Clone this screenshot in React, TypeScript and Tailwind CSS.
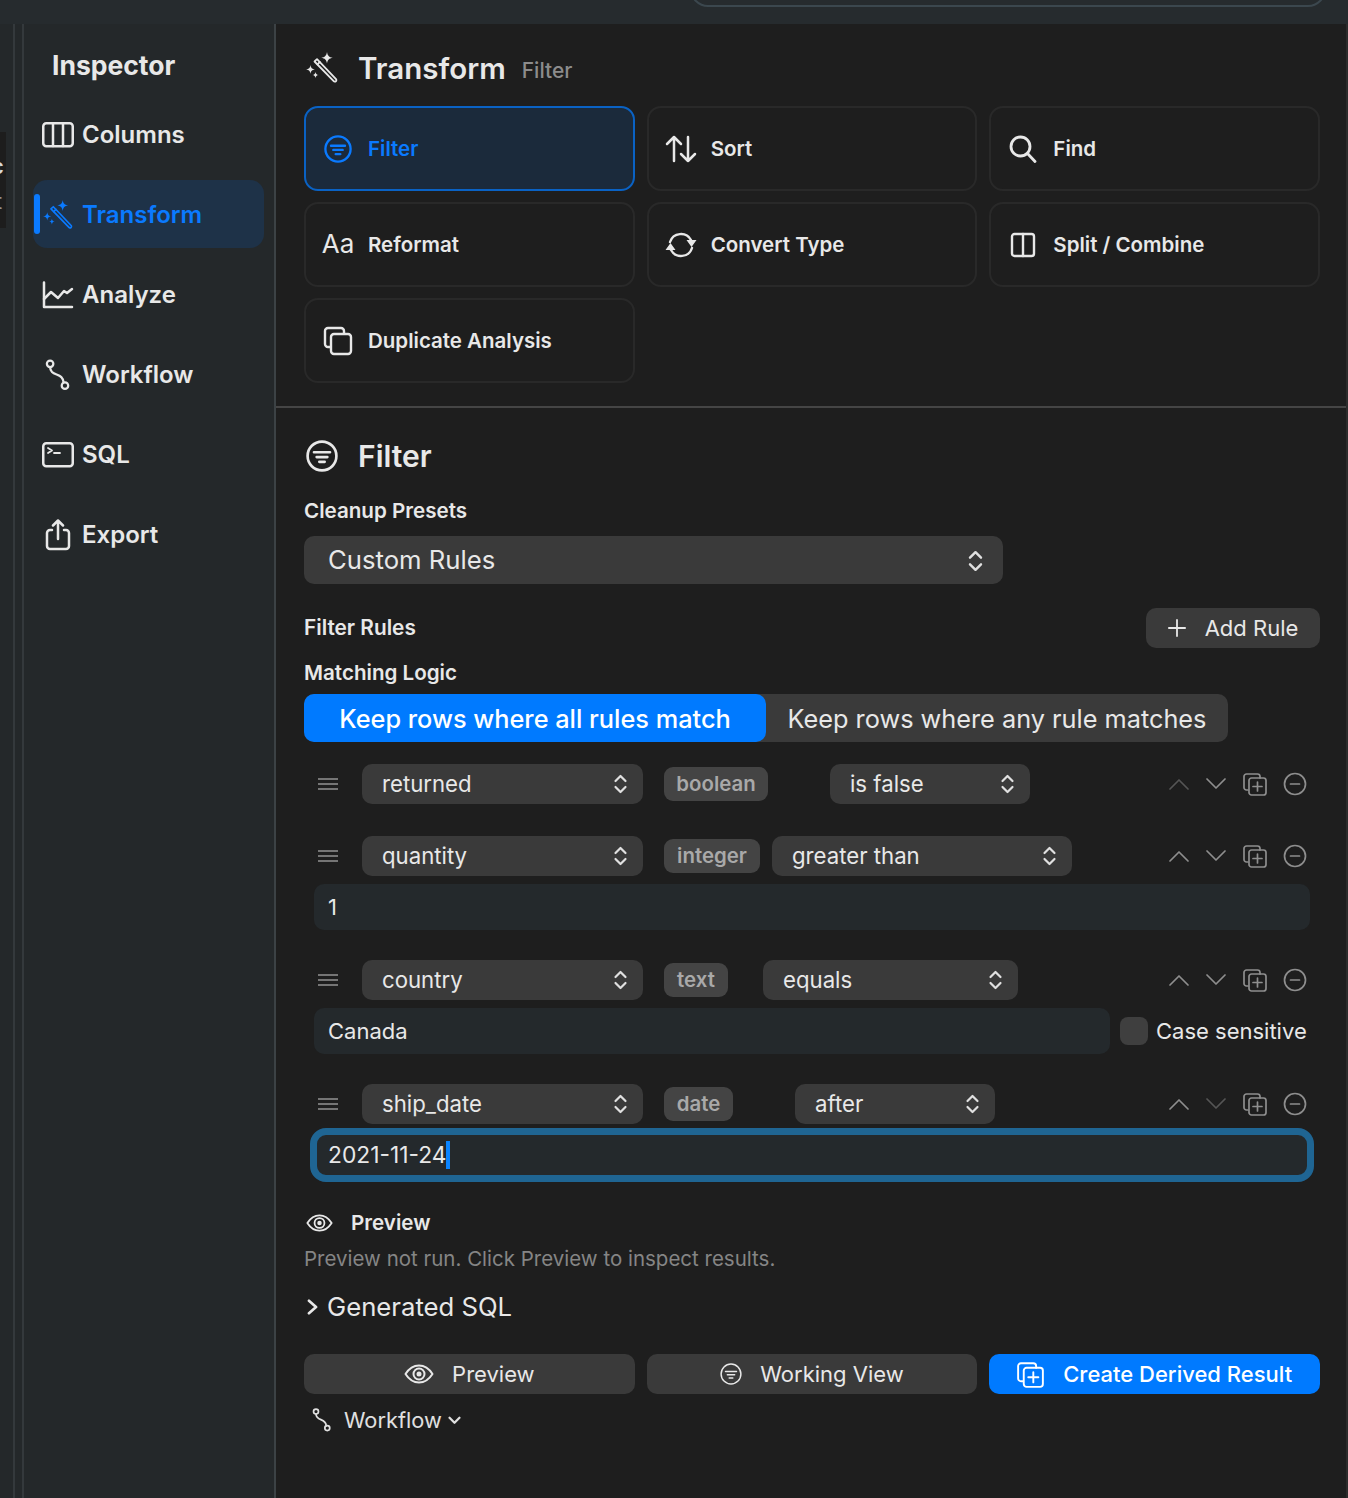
import type { ReactNode } from 'react';

type IconProps = { className?: string };

const base = {
  fill: 'none',
  stroke: 'currentColor',
  strokeLinecap: 'round' as const,
  strokeLinejoin: 'round' as const,
};

function WandIcon({ className }: IconProps) {
  return (
    <svg viewBox="0 0 32 32" className={className} {...base} strokeWidth={1.8}>
      <path d="M8.500 9.500 11 7.200 30 27.200a1.500 1.500 0 0 1-2.300 2z" />
      <path d="M11.500 12.300 13.800 10" />
      <path fill="currentColor" stroke="none" d="M21 0c.6 3.800 2 5.200 5.800 5.800-3.800.6-5.200 2-5.800 5.800-.6-3.800-2-5.200-5.800-5.800 3.800-.6 5.200-2 5.800-5.800z" />
      <path fill="currentColor" stroke="none" d="M4.500 13c.5 3 1.400 3.900 4.400 4.400-3 .5-3.900 1.400-4.400 4.400-.5-3-1.400-3.900-4.400-4.400 3-.5 3.900-1.400 4.400-4.400z" />
      <path fill="currentColor" stroke="none" d="M9.500 20c.4 2 1 2.600 3 3-2 .4-2.600 1-3 3-.4-2-1-2.600-3-3 2-.4 2.600-1 3-3z" />
    </svg>
  );
}

function ColumnsIcon({ className }: IconProps) {
  return (
    <svg viewBox="0 0 32 26" className={className} {...base} strokeWidth={2.500}>
      <rect x="1.250" y="1.250" width="29.500" height="23" rx="3" />
      <path d="M11 1v23M21 1v23" />
    </svg>
  );
}

function ChartIcon({ className }: IconProps) {
  return (
    <svg viewBox="0 0 32 28" className={className} {...base} strokeWidth={2.500}>
      <path d="M2 1.500V26h28" />
      <path d="M2 18 9 11l7 6 6-7 3 2 5-4" />
    </svg>
  );
}

function WorkflowIcon({ className }: IconProps) {
  return (
    <svg viewBox="0 0 28 34" className={className} {...base} strokeWidth={2.400}>
      <circle cx="5.500" cy="5" r="3.500" />
      <circle cx="21.500" cy="28.500" r="3.500" />
      <path d="M5.500 8.500c0 5 3 6.500 7 8 4 1.500 7 3 7.500 8.500" />
    </svg>
  );
}

function TerminalIcon({ className }: IconProps) {
  return (
    <svg viewBox="0 0 32 26" className={className} {...base} strokeWidth={2.500}>
      <rect x="1.250" y="1.250" width="29.500" height="23" rx="3" />
      <path d="m6 6 4 2.500-4 2.500M12 11h6" strokeWidth={1.800} />
    </svg>
  );
}

function ShareIcon({ className }: IconProps) {
  return (
    <svg viewBox="0 0 26 32" className={className} {...base} strokeWidth={2.500}>
      <path d="M7 11H5a3 3 0 0 0-3 3v13a3 3 0 0 0 3 3h16a3 3 0 0 0 3-3V14a3 3 0 0 0-3-3h-2" />
      <path d="M13 20V2M8 6.500 13 1.500l5 5" />
    </svg>
  );
}

function FilterCircleIcon({ className, strokeWidth = 2 }: IconProps & { strokeWidth?: number }) {
  return (
    <svg viewBox="0 0 30 30" className={className} {...base} strokeWidth={strokeWidth}>
      <circle cx="15" cy="15" r="13.500" />
      <path d="M7.500 11.500h15M10 16h10M12.500 20.500h5" />
    </svg>
  );
}

function SortIcon({ className }: IconProps) {
  return (
    <svg viewBox="0 0 32 28" className={className} {...base} strokeWidth={2.500}>
      <path d="M9 26V2M2 9l7-7 7 7" />
      <path d="M23 2v24M16 19l7 7 7-7" />
    </svg>
  );
}

function SearchIcon({ className }: IconProps) {
  return (
    <svg viewBox="0 0 28 28" className={className} {...base} strokeWidth={2.800}>
      <circle cx="11.500" cy="11.500" r="9.500" />
      <path d="m18.500 18.500 7.500 8" />
    </svg>
  );
}

function ConvertIcon({ className }: IconProps) {
  return (
    <svg viewBox="0 0 32 30" className={className} {...base} strokeWidth={2.400}>
      <path d="M5 12A11.500 11.500 0 0 1 26 10" />
      <path d="M27 18A11.500 11.500 0 0 1 6 20" />
      <path fill="currentColor" stroke="none" d="M26.500 17 21.500 10h10zM5.500 13l5 7h-10z" />
    </svg>
  );
}

function SplitIcon({ className }: IconProps) {
  return (
    <svg viewBox="0 0 26 26" className={className} {...base} strokeWidth={2.400}>
      <rect x="2" y="2" width="22" height="22" rx="2.500" />
      <path d="M13 2v22" />
    </svg>
  );
}

function CopyIcon({ className }: IconProps) {
  return (
    <svg viewBox="0 0 30 30" className={className} {...base} strokeWidth={2.400}>
      <path d="M7 21H5a3 3 0 0 1-3-3V5a3 3 0 0 1 3-3h13a3 3 0 0 1 3 3v2" />
      <rect x="8" y="8" width="20" height="20" rx="3" />
    </svg>
  );
}

function CopyPlusIcon({ className, strokeWidth = 1.700 }: IconProps & { strokeWidth?: number }) {
  return (
    <svg viewBox="0 0 24 24" className={className} {...base} strokeWidth={strokeWidth}>
      <path d="M5 18H3.500A2.500 2.500 0 0 1 1 15.500v-11A2.500 2.500 0 0 1 3.500 2h11A2.500 2.500 0 0 1 17 4.500V6" />
      <rect x="6" y="6" width="17" height="17" rx="2.500" />
      <path d="M14.500 10v9M10 14.500h9" />
    </svg>
  );
}

function MinusCircleIcon({ className }: IconProps) {
  return (
    <svg viewBox="0 0 24 24" className={className} {...base} strokeWidth={1.700}>
      <circle cx="12" cy="12" r="10.500" />
      <path d="M7.500 12h9" />
    </svg>
  );
}

function EyeIcon({ className }: IconProps) {
  return (
    <svg viewBox="0 0 30 20" className={className} {...base} strokeWidth={2}>
      <path d="M1.500 10C5 4.500 9.500 1.500 15 1.500S25 4.500 28.500 10C25 15.500 20.500 18.500 15 18.500S5 15.500 1.500 10z" />
      <circle cx="15" cy="10" r="5.500" />
      <circle cx="15" cy="10" r="2.500" fill="currentColor" stroke="none" />
    </svg>
  );
}

function UpDownIcon({ className }: IconProps) {
  return (
    <svg viewBox="0 0 14 20" className={className} {...base} strokeWidth={2.200}>
      <path d="m2 7 5-5 5 5M2 13l5 5 5-5" />
    </svg>
  );
}

function Chevron({ up, dim }: { up?: boolean; dim?: boolean }) {
  return (
    <svg viewBox="0 0 20 12" className={`h-[12px] w-[20px] ${dim ? 'text-[#555555]' : 'text-[#8e8e8e]'}`} {...base} strokeWidth={1.700}>
      <path d={up ? 'M1 11 10 2l9 9' : 'M1 1l9 9 9-9'} />
    </svg>
  );
}

function NavItem({ icon, label, active }: { icon: ReactNode; label: string; active?: boolean }) {
  return (
    <div className={`relative flex h-[68px] items-center rounded-[14px] pl-[49px] pt-[2px] text-[24px] font-semibold ${active ? 'bg-[#1e3248] text-[#0a7aff]' : 'text-[#e8e8e8]'}`}>
      {active && <span className="absolute left-[1px] top-[14px] h-[40px] w-[6px] rounded-full bg-[#0a7aff]" />}
      <span className="absolute left-[9px] top-[1px] flex h-full w-[32px] items-center justify-center">{icon}</span>
      {label}
    </div>
  );
}

function ToolCard({ icon, label, active }: { icon: ReactNode; label: string; active?: boolean }) {
  return (
    <div className={`flex h-[85px] items-center rounded-[14px] border-2 text-[20.5px] font-semibold ${active ? 'border-[#0a62c4] bg-[#1b2a3b] text-[#0a7aff]' : 'border-[#292929] text-[#e8e8e8]'}`}>
      <span className="ml-[16px] flex w-[32px] items-center justify-center">{icon}</span>
      <span className="ml-[14px] mt-[2px]">{label}</span>
    </div>
  );
}

function SelectBox({ label, className }: { label: string; className: string }) {
  return (
    <div className={`flex h-[40px] items-center justify-between rounded-[10px] bg-[#3a3a3a] pl-[20px] pr-[15px] text-[22.2px] text-[#e8e8e8] ${className}`}>
      {label}
      <UpDownIcon className="h-[20px] w-[15px] text-[#e0e0e0]" />
    </div>
  );
}

function RuleRow({ field, type, badgeClass, op, opClass, upDim, downDim }: {
  field: string;
  type: string;
  badgeClass: string;
  op: string;
  opClass: string;
  upDim?: boolean;
  downDim?: boolean;
}) {
  return (
    <div className="flex h-[40px] items-center">
      <div className="ml-[14px] flex w-[20px] flex-col gap-[3px]">
        <span className="h-[2px] bg-[#757575]" />
        <span className="h-[2px] bg-[#757575]" />
        <span className="h-[2px] bg-[#757575]" />
      </div>
      <SelectBox label={field} className="ml-[24px] w-[281px]" />
      <span className={`ml-[21px] flex h-[34px] items-center justify-center rounded-[9px] bg-[#444444] text-[20.4px] font-semibold text-[#a9a9a9] ${badgeClass}`}>{type}</span>
      <SelectBox label={op} className={opClass} />
      <div className="ml-auto mr-[13px] flex items-center">
        <Chevron up dim={upDim} />
        <span className="ml-[17px]"><Chevron dim={downDim} /></span>
        <CopyPlusIcon className="ml-[17px] h-[24px] w-[24px] text-[#8e8e8e]" />
        <MinusCircleIcon className="ml-[16px] h-[24px] w-[24px] text-[#8e8e8e]" />
      </div>
    </div>
  );
}

function ActionButton({ icon, label, primary }: { icon: ReactNode; label: string; primary?: boolean }) {
  return (
    <div className={`flex h-[40px] items-center justify-center rounded-[10px] text-[22px] ${primary ? 'bg-[#007aff] font-medium text-white' : 'bg-[#3a3a3a] text-[#e8e8e8]'}`}>
      {icon}
      {label}
    </div>
  );
}

export default function App() {
  return (
    <div className="flex h-[1498px] w-[1348px] flex-col overflow-hidden bg-[#1e1e1e] font-['Inter',sans-serif]">
      {/* window toolbar, only the edge of the search field shows */}
      <div className="h-[24px] shrink-0 overflow-hidden bg-[#262b2e] pl-[690px] pr-[22px]">
        <div className="mt-[-33px] h-[40px] rounded-[18px] border-2 border-[#3b474e]" />
      </div>

      <div className="flex flex-1">
        {/* left gutter */}
        <div className="w-[24px] shrink-0 bg-[#24282a] pt-[108px]">
          <div className="relative h-full">
            <div className="h-[96px] w-[6px] overflow-hidden bg-[#1d1d1d] text-[22px] leading-[32px] text-[#d8d8d8]">
              <div className="ml-[-9px] mt-[18px] font-semibold">c</div>
              <div className="ml-[-5px] mt-[3px] text-[#909090]">t</div>
            </div>
            <span className="absolute bottom-0 left-[13px] top-[-108px] w-[2px] bg-[#34393c]" />
            <span className="absolute bottom-0 left-[22px] top-[-108px] w-[2px] bg-[#34393c]" />
          </div>
        </div>

        {/* sidebar */}
        <aside className="w-[252px] shrink-0 border-r-2 border-[#3c4245] bg-[#24282a] pl-[9px] pr-[10px]">
          <h2 className="ml-[19px] mt-[23px] text-[26.5px] leading-[36px] font-bold text-[#e8e8e8]">Inspector</h2>
          <div className="mt-[17px] flex flex-col gap-[12px]">
            <NavItem icon={<ColumnsIcon className="h-[26px] w-[32px]" />} label="Columns" />
            <NavItem active icon={<WandIcon className="h-[30px] w-[30px]" />} label="Transform" />
            <NavItem icon={<ChartIcon className="h-[28px] w-[32px]" />} label="Analyze" />
            <NavItem icon={<WorkflowIcon className="h-[32px] w-[26px]" />} label="Workflow" />
            <NavItem icon={<TerminalIcon className="h-[26px] w-[32px]" />} label="SQL" />
            <NavItem icon={<ShareIcon className="h-[32px] w-[26px]" />} label="Export" />
          </div>
        </aside>

        <main className="flex-1 border-r-2 border-[#2c2c2c]">
          <section className="h-[384px] border-b-2 border-[#454545] pl-[28px] pr-[26px]">
            <div className="flex h-[82px] items-center pt-[6px]">
              <WandIcon className="ml-[2px] h-[32px] w-[32px] text-[#e8e8e8]" />
              <h1 className="ml-[20px] text-[29.5px] font-semibold text-[#e8e8e8]">Transform</h1>
              <span className="ml-[16px] mt-[6px] text-[21px] font-medium text-[#8c8c8c]">Filter</span>
            </div>
            <div className="grid grid-cols-3 gap-x-[12px] gap-y-[11px]">
              <ToolCard active icon={<FilterCircleIcon className="h-[28px] w-[28px]" strokeWidth={2.500} />} label="Filter" />
              <ToolCard icon={<SortIcon className="h-[28px] w-[32px]" />} label="Sort" />
              <ToolCard icon={<SearchIcon className="h-[28px] w-[28px]" />} label="Find" />
              <ToolCard icon={<span className="mt-[-2px] text-[26px] font-normal">Aa</span>} label="Reformat" />
              <ToolCard icon={<ConvertIcon className="h-[30px] w-[32px]" />} label="Convert Type" />
              <ToolCard icon={<SplitIcon className="h-[26px] w-[26px]" />} label="Split / Combine" />
              <ToolCard icon={<CopyIcon className="h-[30px] w-[30px]" />} label="Duplicate Analysis" />
            </div>
          </section>

          <section className="pl-[28px] pr-[26px]">
            <div className="mt-[28px] flex h-[40px] items-center">
              <FilterCircleIcon className="ml-[2px] h-[32px] w-[32px] text-[#e8e8e8]" strokeWidth={2.500} />
              <h2 className="ml-[20px] text-[30px] font-semibold text-[#e8e8e8]">Filter</h2>
            </div>
            <div className="mt-[21px] h-[28px] text-[20.6px] leading-[28px] font-semibold text-[#e8e8e8]">Cleanup Presets</div>
            <div className="mt-[11px] flex h-[48px] w-[699px] items-center justify-between rounded-[10px] bg-[#3a3a3a] pl-[24px] pr-[19px] pt-[1px] text-[25.7px] text-[#e8e8e8]">
              Custom Rules
              <UpDownIcon className="h-[22px] w-[17px] text-[#e0e0e0]" />
            </div>

            <div className="mt-[24px] flex h-[40px] items-center justify-between">
              <span className="text-[20.8px] font-semibold text-[#e8e8e8]">Filter Rules</span>
              <div className="flex h-[40px] w-[174px] items-center justify-center rounded-[10px] bg-[#3a3a3a] text-[22px] text-[#e8e8e8]">
                <svg viewBox="0 0 20 20" className="mr-[19px] h-[18px] w-[18px]" {...base} strokeWidth={2}>
                  <path d="M10 1v18M1 10h18" />
                </svg>
                Add Rule
              </div>
            </div>
            <div className="mt-[11px] h-[28px] text-[20.6px] leading-[28px] font-semibold text-[#e8e8e8]">Matching Logic</div>
            <div className="mt-[7px] flex h-[48px] w-[924px] rounded-[10px] bg-[#3a3a3a] text-[25.3px] text-[#e8e8e8]">
              <div className="flex w-[462px] items-center justify-center rounded-[10px] bg-[#007aff] pt-[1px] font-medium text-white">Keep rows where all rules match</div>
              <div className="flex flex-1 items-center justify-center pt-[1px]">Keep rows where any rule matches</div>
            </div>

            <div className="mt-[22px]">
              <RuleRow field="returned" type="boolean" badgeClass="w-[104px]" op="is false" opClass="ml-[62px] w-[200px]" upDim />
              <div className="mt-[32px]">
                <RuleRow field="quantity" type="integer" badgeClass="w-[96px]" op="greater than" opClass="ml-[12px] w-[300px]" />
              </div>
              <div className="ml-[10px] mr-[10px] mt-[8px] flex h-[46px] items-center rounded-[10px] bg-[#24292c] pl-[14px] text-[22px] text-[#e8e8e8]">1</div>

              <div className="mt-[30px]">
                <RuleRow field="country" type="text" badgeClass="w-[64px]" op="equals" opClass="ml-[35px] w-[255px]" />
              </div>
              <div className="mt-[8px] flex h-[46px] items-center">
                <div className="ml-[10px] flex h-full w-[796px] items-center rounded-[10px] bg-[#24292c] pl-[14px] text-[22px] text-[#e8e8e8]">Canada</div>
                <span className="ml-[10px] h-[28px] w-[28px] rounded-[8px] bg-[#3f3f3f]" />
                <span className="ml-[8px] text-[22px] text-[#e8e8e8]">Case sensitive</span>
              </div>

              <div className="mt-[30px]">
                <RuleRow field="ship_date" type="date" badgeClass="w-[69px]" op="after" opClass="ml-[62px] w-[200px]" downDim />
              </div>
              <div className="ml-[6px] mr-[6px] mt-[4px] flex h-[54px] items-center rounded-[16px] border-[7px] border-[#1f6593] bg-[#24292c] pl-[11px] text-[22.8px] text-[#e8e8e8]">
                2021-11-24
                <span className="h-[28px] w-[4px] bg-[#0a84ff]" />
              </div>
            </div>

            <div className="mt-[27px] flex h-[28px] items-center text-[20.6px] font-semibold text-[#e8e8e8]">
              <EyeIcon className="ml-[2px] h-[18px] w-[27px]" />
              <span className="ml-[18px]">Preview</span>
            </div>
            <p className="mt-[8px] h-[28px] text-[20.5px] leading-[28px] text-[#858585]">Preview not run. Click Preview to inspect results.</p>
            <div className="mt-[14px] flex h-[40px] items-center text-[25.7px] text-[#e8e8e8]">
              <svg viewBox="0 0 12 18" className="ml-[3px] h-[16px] w-[11px]" {...base} strokeWidth={3}>
                <path d="m2 2 8 7-8 7" />
              </svg>
              <span className="ml-[9px]">Generated SQL</span>
            </div>
            <div className="mt-[27px] grid grid-cols-3 gap-x-[12px]">
              <ActionButton icon={<EyeIcon className="mr-[18px] h-[20px] w-[30px]" />} label="Preview" />
              <ActionButton icon={<FilterCircleIcon className="mr-[18px] h-[22px] w-[22px]" strokeWidth={2} />} label="Working View" />
              <ActionButton primary icon={<CopyPlusIcon className="mr-[19px] h-[27px] w-[27px]" strokeWidth={1.700} />} label="Create Derived Result" />
            </div>
            <div className="mt-[12px] flex h-[28px] items-center text-[21.8px] text-[#e0e0e0]">
              <WorkflowIcon className="ml-[8px] h-[24px] w-[20px]" />
              <span className="ml-[12px]">Workflow</span>
              <svg viewBox="0 0 14 10" className="ml-[6px] h-[9px] w-[13px]" {...base} strokeWidth={2.500}>
                <path d="m1.500 2 5.500 5.500L12.500 2" />
              </svg>
            </div>
          </section>
        </main>
      </div>
    </div>
  );
}
